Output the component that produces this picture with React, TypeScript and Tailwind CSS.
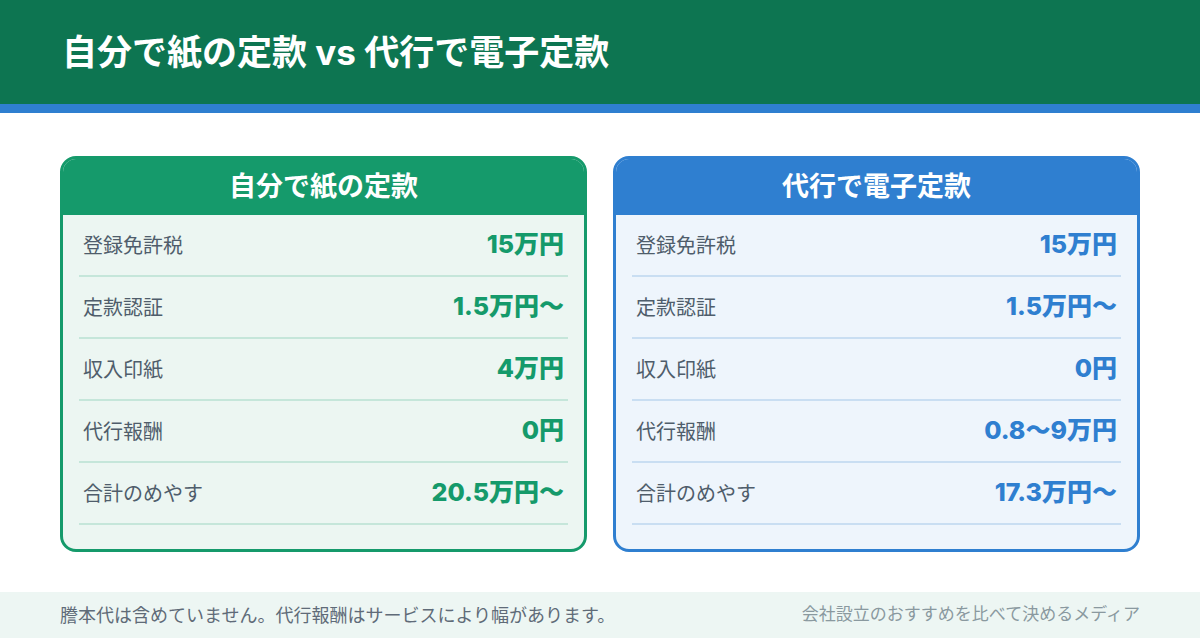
import React from "react";

type Row = { label: string; value: string };

const leftRows: Row[] = [
  { label: "登録免許税", value: "15万円" },
  { label: "定款認証", value: "1.5万円〜" },
  { label: "収入印紙", value: "4万円" },
  { label: "代行報酬", value: "0円" },
  { label: "合計のめやす", value: "20.5万円〜" },
];

const rightRows: Row[] = [
  { label: "登録免許税", value: "15万円" },
  { label: "定款認証", value: "1.5万円〜" },
  { label: "収入印紙", value: "0円" },
  { label: "代行報酬", value: "0.8〜9万円" },
  { label: "合計のめやす", value: "17.3万円〜" },
];

const font = { fontFamily: 'Inter, "Noto Sans CJK JP", "Noto Sans", sans-serif' };

function Card({
  title,
  rows,
  border,
  bg,
  divider,
  value,
}: {
  title: string;
  rows: Row[];
  border: string;
  bg: string;
  divider: string;
  value: string;
}) {
  return (
    <div className={`flex flex-col overflow-hidden rounded-[16px] border-[3px] ${border} ${bg}`}>
      <div className={`flex h-[56px] items-center justify-center text-[27px] font-bold text-white ${title === "自分で紙の定款" ? "bg-[#159a6b]" : "bg-[#2f7fd0]"}`}>
        {title}
      </div>
      <div className="px-[16px] pb-[24px]">
        {rows.map((r) => (
          <div
            key={r.label}
            className={`flex h-[62px] items-center justify-between border-b-2 ${divider} px-[4px]`}
          >
            <span className="pt-[2px] text-[20px] text-[#4f5d6b]">{r.label}</span>
            <span className={`text-[25px] font-extrabold ${value}`}>{r.value}</span>
          </div>
        ))}
      </div>
    </div>
  );
}

export default function App() {
  return (
    <div style={font} className="flex h-[638px] w-[1200px] flex-col overflow-hidden bg-white">
      <header className="flex h-[104px] items-center bg-[#0d7551] px-[62px]">
        <h1 className="text-[35px] font-bold text-white">自分で紙の定款 vs 代行で電子定款</h1>
      </header>
      <div className="h-[9px] bg-[#2f7fd0]" />
      <main className="grid grid-cols-2 gap-[26px] px-[60px] pt-[43px]">
        <Card
          title="自分で紙の定款"
          rows={leftRows}
          border="border-[#159a6b]"
          bg="bg-[#ecf6f2]"
          divider="border-[#c5e6da]"
          value="text-[#159a6b]"
        />
        <Card
          title="代行で電子定款"
          rows={rightRows}
          border="border-[#2f7fd0]"
          bg="bg-[#eef5fc]"
          divider="border-[#c9def2]"
          value="text-[#2f7fd0]"
        />
      </main>
      <div className="flex-1" />
      <footer className="flex h-[46px] items-center justify-between bg-[#edf6f3] px-[60px]">
        <span className="text-[18px] text-[#5f6b78]">謄本代は含めていません。代行報酬はサービスにより幅があります。</span>
        <span className="text-[17px] text-[#8a999f]">会社設立のおすすめを比べて決めるメディア</span>
      </footer>
    </div>
  );
}
